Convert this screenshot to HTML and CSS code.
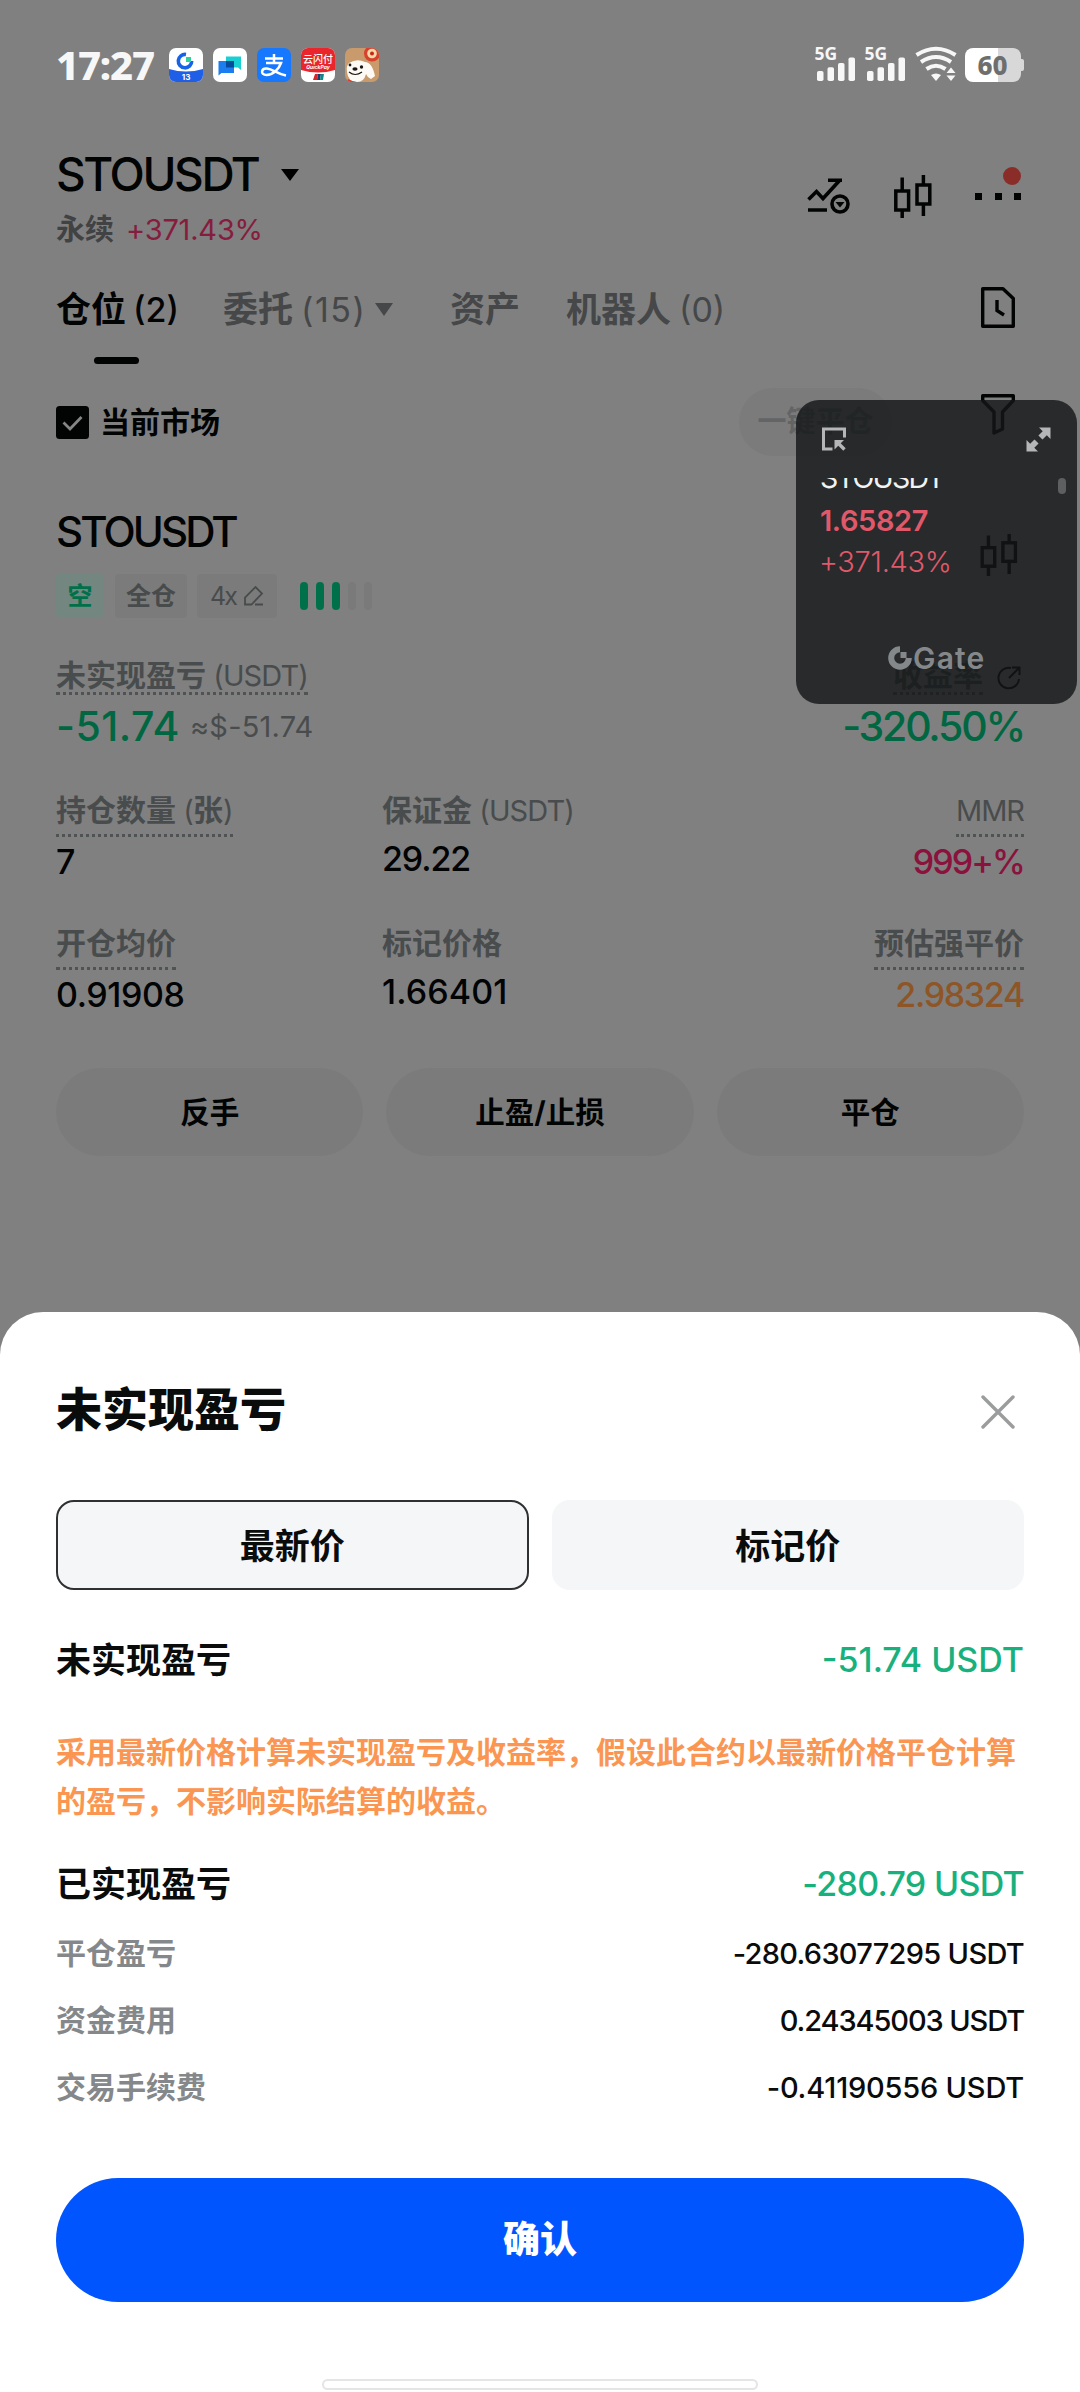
FILE: index.html
```html
<!DOCTYPE html>
<html lang="zh-CN">
<head>
<meta charset="utf-8">
<title>未实现盈亏</title>
<link rel="stylesheet" href="styles.css">
</head>
<body>
<div class="screen">
  <div class="status">
    <span class="clock">17:27</span>
    <div class="apps">
      <svg width="34" height="34" viewBox="0 0 34 34"><defs><clipPath id="r"><rect width="34" height="34" rx="7"/></clipPath></defs><g clip-path="url(#r)"><rect width="34" height="34" fill="#fff"/><path d="M0 21Q17 26 34 21V34H0Z" fill="#1f5fe8"/><path d="M17 6.500A6.700 6.700 0 1 0 22.700 13" fill="none" stroke="#1763e8" stroke-width="3.600"/><rect x="17" y="9" width="5" height="5" fill="#2fd39a"/></g><text x="17" y="32" text-anchor="middle" class="app-13">13</text></svg>
      <svg width="34" height="34" viewBox="0 0 34 34"><rect width="34" height="34" rx="7" fill="#fff"/><path d="M13 8.500H28V22L25 19.500H13Z" fill="#18cfd4"/><path d="M5.500 13H21V25H8.500L5.500 27.500Z" fill="#1c7df0"/><path d="M13 13H21V19.500H13Z" fill="#064a9c"/></svg>
      <svg width="34" height="34" viewBox="0 0 34 34"><rect width="34" height="34" rx="7" fill="#1677ff"/><path d="M8 10.500H26M17 6V15M9 15H24C22 21 16 27 9.500 27C3 27 4 20 10 20.500C16 21 20 26 29 27.500" fill="none" stroke="#fff" stroke-width="2.500"/></svg>
      <svg width="34" height="34" viewBox="0 0 34 34"><g clip-path="url(#r)"><rect width="34" height="34" fill="#fff"/><path d="M0 0H34V22Q17 27 0 22Z" fill="#e8262b"/><path d="M14 26H17L16 32H12Z" fill="#d4262b"/><path d="M17 26H20L19 32H16Z" fill="#14406f"/><path d="M20 26H23L22 32H19Z" fill="#0a8a86"/></g><text x="17" y="15" text-anchor="middle" class="app-pay">云闪付</text><text x="17" y="21" text-anchor="middle" class="app-quick">QuickPay</text></svg>
      <svg width="34" height="34" viewBox="0 0 34 34"><g clip-path="url(#r)"><rect width="34" height="34" fill="#c99a6b"/><path d="M4 15Q12 10 20 14Q27 14 30 28L26 31Q22 29 21 26Q19 34 12 34Q3 34 2 24Q1 18 4 15Z" fill="#fdfaf6"/><circle cx="27" cy="5.500" r="8" fill="#d8402e"/><circle cx="27" cy="5.500" r="4.800" fill="#f4d9a8"/><circle cx="27" cy="5.500" r="2" fill="#c8281c"/><circle cx="5" cy="17" r="1.400" fill="#1d1612"/><circle cx="16.500" cy="19" r="1.700" fill="#1d1612"/><ellipse cx="10" cy="21" rx="2.600" ry="1.800" fill="#1d1612"/><path d="M4 24Q10 29 17 24" fill="none" stroke="#1d1612" stroke-width="1.200"/><path d="M3 31Q8 34 12 34H2Z" fill="#d63a30"/></g></svg>
    </div>
    <div class="sys">
      <svg class="signal" width="42" height="36" viewBox="0 0 42 36"><text x="-0.500" y="13.500" class="net">5G</text><g fill="#f7f7f7"><rect x="2" y="25" width="6.500" height="10" rx="1.800"/><rect x="12.500" y="21.300" width="6.500" height="13.700" rx="1.800"/><rect x="23" y="17" width="6.500" height="18" rx="1.800"/><rect x="33.500" y="11.500" width="6.500" height="23.500" rx="1.800"/></g></svg>
      <svg class="signal" width="42" height="36" viewBox="0 0 42 36"><text x="-0.500" y="13.500" class="net">5G</text><g fill="#f7f7f7"><rect x="2" y="25" width="6.500" height="10" rx="1.800"/><rect x="12.500" y="21.300" width="6.500" height="13.700" rx="1.800"/><rect x="23" y="17" width="6.500" height="18" rx="1.800"/><rect x="33.500" y="11.500" width="6.500" height="23.500" rx="1.800"/></g></svg>
      <svg class="wifi" width="42" height="36" viewBox="0 0 42 36"><g fill="none" stroke="#f7f7f7" stroke-width="4"><path d="M1.500 9Q21 -3.500 40.500 9"/><path d="M6 16Q21 6 36 16"/><path d="M11.500 23Q21 16.500 30.500 23"/></g><path d="M16 29Q21 26 26 29L21 35Z" fill="#f7f7f7"/><path d="M31.500 27L36 21.500L40.500 27ZM31.500 29.500H40.500L36 35Z" fill="#f7f7f7"/></svg>
      <div class="battery"><span class="pct">60</span></div>
    </div>
  </div>

  <header class="pair">
    <div class="pair-info">
      <div class="pair-name"><span>STOUSDT</span><svg width="18" height="12" viewBox="0 0 18 12"><path d="M0 0H18L9 12Z"/></svg></div>
      <div class="pair-sub"><span class="zh">永续</span><span class="chg">+371.43%</span></div>
    </div>
    <div class="pair-tools">
      <svg width="44" height="36" viewBox="0 0 44 36" fill="none" stroke="#020303" stroke-width="3.600"><path d="M1.500 21.500L9.500 13.500L16 20.500L33 2M21 2.300H35M1 32H20"/><circle cx="33" cy="26" r="8"/><path d="M28.500 24H37.500L33 29.500Z" fill="#020303" stroke="none"/></svg>
      <svg class="kline" width="38" height="43" viewBox="0 0 38 43" fill="none" stroke="#020303" stroke-width="3.500"><rect x="1.800" y="16" width="12.800" height="19"/><rect x="23" y="10" width="12.800" height="19"/><path d="M8.200 2.500V16M8.200 35V43M29.400 0V10M29.400 29V41"/></svg>
      <div class="more"><i></i><i></i><i></i><b class="dot"></b></div>
    </div>
  </header>

  <nav class="tabs">
    <div class="tab t1 on"><div class="tab-label"><span class="zh">仓位</span><span>(2)</span></div><div class="bar"></div></div>
    <div class="tab t2"><div class="tab-label"><span class="zh">委托</span><span class="orders">(15)</span><svg width="18" height="13" viewBox="0 0 18 13"><path d="M0 0H18L9 13Z" fill="#454748"/></svg></div></div>
    <div class="tab t3"><div class="tab-label"><span class="zh">资产</span></div></div>
    <div class="tab"><div class="tab-label"><span class="zh">机器人</span><span>(0)</span></div></div>
    <svg class="doc" width="34" height="41" viewBox="0 0 34 41" fill="none" stroke="#020303" stroke-width="3.400"><path d="M1.700 1.700H22L32.300 11.500V39.300H1.700Z" stroke-linejoin="round"/><path d="M16 13V23.500L23 28"/></svg>
  </nav>

  <div class="filters">
    <div class="check"><svg width="33" height="33" viewBox="0 0 33 33"><rect width="33" height="33" rx="3.500" fill="#020303"/><path d="M7.500 16.500L14 23L25.500 11" fill="none" stroke="#858585" stroke-width="2.800"/></svg><span>当前市场</span></div>
    <div class="close-all">一键平仓</div>
    <svg class="funnel" width="34" height="41" viewBox="0 0 34 41" fill="none" stroke="#020303" stroke-width="3.400"><path d="M1.700 1.700H32.300V6.500L21.500 18V35L13 39V18L1.700 6.500Z" stroke-linejoin="round"/></svg>
  </div>

  <section class="position">
    <div class="pos-head">
      <div>
        <div class="pos-name">STOUSDT</div>
        <div class="badges">
          <span class="badge short">空</span>
          <span class="badge cross">全仓</span>
          <span class="badge lever">4x<svg width="20" height="20" viewBox="0 0 20 20" fill="none" stroke="#484b4c" stroke-width="1.800"><path d="M1 18.500V11.500L11.500 1L18 7.500L7.500 18.500ZM11 18.500H19"/></svg></span>
          <span class="adl"><i class="lit"></i><i class="lit"></i><i class="lit"></i><i></i><i></i></span>
        </div>
      </div>
      <svg class="kline-sm" width="38" height="42" viewBox="0 0 38 43" fill="none" stroke="#020303" stroke-width="3.500"><rect x="1.800" y="14" width="12.800" height="19"/><rect x="23" y="9" width="12.800" height="19"/><path d="M8.200 1.500V14M8.200 33V43M29.400 0V9M29.400 28V41"/></svg>
    </div>
    <div class="pnl">
      <div>
        <div class="label dotted"><span class="zh">未实现盈亏</span> (USDT)</div>
        <div class="pnl-value"><span class="big">-51.74</span><span class="approx">≈$-51.74</span></div>
      </div>
      <div class="right">
        <div class="roi"><div class="label dotted"><span class="zh">收益率</span></div><svg width="24" height="24" viewBox="0 0 24 24" fill="none" stroke="#020303" stroke-width="2"><path d="M14 2A10.300 10.300 0 1 0 22 13M12 12L22 2M15 1.500H22.500V9"/></svg></div>
        <div class="big rate">-320.50%</div>
      </div>
    </div>
    <div class="metrics">
      <div><div class="label dotted"><span class="zh">持仓数量</span> (<span class="zh">张</span>)</div><div class="val">7</div></div>
      <div><div class="label"><span class="zh">保证金</span> (USDT)</div><div class="val tight">29.22</div></div>
      <div class="right"><div class="label dotted mmr">MMR</div><div class="val tighter red">999+%</div></div>
      <div><div class="label dotted"><span class="zh">开仓均价</span></div><div class="val">0.91908</div></div>
      <div><div class="label"><span class="zh">标记价格</span></div><div class="val mark">1.66401</div></div>
      <div class="right"><div class="label dotted"><span class="zh">预估强平价</span></div><div class="val liq">2.98324</div></div>
    </div>
    <div class="actions"><div class="action">反手</div><div class="action">止盈/止损</div><div class="action">平仓</div></div>
  </section>

  <aside class="float">
    <div class="float-bar">
      <svg width="24" height="24" viewBox="0 0 24 24" fill="none" stroke="#b4b6b7" stroke-width="3"><path d="M22.500 10.500V2H1.500V22H10.500"/><path d="M22.500 22.500L15.500 15.500" stroke-width="3.400"/><path d="M12.500 13H22L12.500 22.500Z" fill="#b4b6b7" stroke="none"/></svg>
      <svg width="25" height="25" viewBox="0 0 25 25"><path d="M13 0.500H24.500V12L20.800 8.300L16.500 12.600L12.400 8.500L16.700 4.200ZM0.500 13L4.200 16.700L8.500 12.400L12.600 16.500L8.300 20.800L12 24.500H0.500Z" fill="#b4b6b7"/></svg>
    </div>
    <div class="ticker">
      <div class="clip"><span>STOUSDT</span></div>
      <div class="last">1.65827</div>
      <div class="last-chg">+371.43%</div>
    </div>
    <div class="gate"><svg width="24" height="24" viewBox="0 0 24 24"><path d="M12 3.200A8.800 8.800 0 1 0 20.800 12" fill="none" stroke="#85888a" stroke-width="6"/><rect x="12.500" y="6" width="6" height="6" fill="#85888a"/></svg><span>Gate</span></div>
    <div class="thumb"></div>
  </aside>

  <section class="sheet">
    <div class="sheet-head"><h1>未实现盈亏</h1><svg width="34" height="34" viewBox="0 0 34 34" fill="none" stroke="#9b9c9d" stroke-width="3.400" stroke-linecap="round"><path d="M2 2L32 32M32 2L2 32"/></svg></div>
    <div class="segments"><div class="seg active">最新价</div><div class="seg">标记价</div></div>
    <div class="sum first"><span class="name">未实现盈亏</span><span class="amount">-51.74 USDT</span></div>
    <p class="note">采用最新价格计算未实现盈亏及收益率，假设此合约以最新价格平仓计算的盈亏，不影响实际结算的收益。</p>
    <div class="sum"><span class="name">已实现盈亏</span><span class="amount realized">-280.79 USDT</span></div>
    <div class="details">
      <div class="detail"><span class="name">平仓盈亏</span><span class="closing">-280.63077295 USDT</span></div>
      <div class="detail"><span class="name">资金费用</span><span class="funding">0.24345003 USDT</span></div>
      <div class="detail"><span class="name">交易手续费</span><span class="fee">-0.41190556 USDT</span></div>
    </div>
    <div class="confirm">确认</div>
    <div class="home"></div>
  </section>
</div>
</body>
</html>
```
FILE: styles.css
```css
* { box-sizing: border-box; }
body { margin: 0; font-family: Inter, "Noto Sans CJK SC", sans-serif; color: #020303; }
svg { display: block; flex: none; }
.screen { position: relative; width: 1080px; height: 2392px; background: #808080; overflow: hidden; display: flex; flex-direction: column; }
.zh { font-weight: 700; letter-spacing: 0; }

/* status bar */
.status { height: 130px; padding: 0 56px; display: flex; align-items: center; color: #f7f7f7; }
.clock { font: 800 40px/50px "Noto Sans", sans-serif; letter-spacing: -1.2px; width: 113px; white-space: nowrap; }
.apps { display: flex; gap: 10px; }
.app-13 { font: 700 8px Inter, sans-serif; fill: #fff; }
.app-pay { font: 500 10px "Noto Sans CJK SC", sans-serif; fill: #fff; }
.app-quick { font: italic 700 5px Inter, sans-serif; fill: #fff; }
.sys { margin-left: auto; display: flex; align-items: center; }
.signal { margin: -2px 8px 0 0; overflow: visible; }
.net { font: 700 17.5px "Noto Sans", sans-serif; fill: #f7f7f7; }
.wifi { margin: -2px 8px 0 0; }
.battery { position: relative; width: 56px; height: 34px; margin-right: 3px; border-radius: 8px; background: linear-gradient(90deg, #fff 33px, #d8d8d8 33px); display: flex; align-items: center; justify-content: center; }
.battery::after { content: ""; position: absolute; right: -3px; top: 11px; width: 3px; height: 12px; border-radius: 0 2px 2px 0; background: #d8d8d8; }
.pct { font: 800 26px/34px "Noto Sans", sans-serif; color: #6e6e6e; padding-right: 1px; }

/* trading pair header */
.pair { height: 132px; padding: 14px 56px 0; display: flex; justify-content: space-between; }
.pair-name { display: flex; align-items: center; gap: 23px; height: 61px; font-size: 46px; font-weight: 500; line-height: 61px; letter-spacing: -2.4px; }
.pair-sub { display: flex; align-items: center; gap: 12px; height: 50px; font-size: 29px; line-height: 50px; letter-spacing: -0.2px; color: #404243; }
.chg { color: #861c3e; }
.pair-tools { height: 104px; display: flex; align-items: center; padding-right: 3px; }
.kline { margin: 0 43px 0 43px; }
.more { position: relative; width: 46px; display: flex; justify-content: space-between; }
.more i { width: 7px; height: 7px; background: #020303; }
.dot { position: absolute; right: 0; top: -26px; width: 18px; height: 18px; border-radius: 50%; background: #8a2d28; }

/* tabs */
.tabs { height: 112px; padding: 20px 65px 0 56px; display: flex; gap: 46px; }
.tab { color: #454748; }
.tab.on { color: #020303; }
.t1 { width: 121px; }
.t2 { width: 181px; }
.t3 { width: 70px; }
.tab-label { display: flex; align-items: center; gap: 8px; height: 55px; font-size: 34px; line-height: 55px; white-space: nowrap; }
.on .tab-label { font-weight: 500; gap: 7px; }
.tab-label .zh { font-size: 35px; }
.tab-label svg { margin-left: 1px; }
.orders { letter-spacing: 1.5px; }
.bar { width: 45px; height: 7px; margin: 20px auto 0; border-radius: 3.5px; background: #020303; }
.doc { margin: 5px 0 0 auto; }

/* filter row */
.filters { height: 96px; padding: 0 65px 0 56px; display: flex; align-items: center; }
.check { display: flex; align-items: center; gap: 11px; font-size: 30px; font-weight: 700; line-height: 40px; }
.check span { margin-top: -1px; }
.close-all { margin-left: auto; width: 153px; height: 68px; border-radius: 34px; background: #7b7b7b; color: #636465; font-size: 29px; font-weight: 700; line-height: 68px; text-align: center; }
.funnel { margin: 0 0 15px 89px; }

/* position card */
.position { padding: 31px 56px 0; }
.pos-head { display: flex; justify-content: space-between; }
.pos-name { height: 60px; font-size: 42px; font-weight: 500; line-height: 61px; letter-spacing: -2.9px; }
.kline-sm { margin: 33px 6px 0 0; }
.badges { display: flex; align-items: center; margin-top: 13px; height: 44px; }
.badge { height: 44px; border-radius: 4px; background: #7b7b7b; color: #484b4c; font-size: 25px; font-weight: 700; line-height: 44px; text-align: center; }
.short { width: 48px; background: #738680; color: #00704a; }
.cross { width: 72px; margin-left: 11px; }
.lever { width: 80px; margin-left: 10px; display: flex; align-items: center; justify-content: center; gap: 8px; font-weight: 400; letter-spacing: -1.8px; }
.adl { display: flex; gap: 8px; margin-left: 23px; }
.adl i { width: 8px; height: 28px; border-radius: 4px; background: #7a7a7a; }
.adl .lit { background: #00704a; }
.label { width: fit-content; font-size: 29px; line-height: 46px; letter-spacing: -0.9px; color: #494c4d; white-space: nowrap; }
.label .zh { font-size: 30px; line-height: 1; }
.dotted { border-bottom: 3px dotted #505354; }
.mmr { letter-spacing: -1px; }
.right { display: flex; flex-direction: column; align-items: flex-end; }
.pnl { display: flex; justify-content: space-between; margin-top: 42px; }
.pnl .label { line-height: 32px; }
.pnl-value { display: flex; align-items: center; gap: 10px; margin-top: 6px; }
.big { font-size: 41px; font-weight: 500; line-height: 50px; letter-spacing: 0.5px; color: #006742; }
.rate { margin-top: 6px; letter-spacing: -2.2px; }
.approx { font-size: 29px; letter-spacing: 0.2px; color: #494c4d; }
.roi { display: flex; align-items: center; gap: 14px; margin-right: 3px; }
.metrics { display: grid; grid-template-columns: 326px 326px 1fr; row-gap: 39px; margin-top: 37px; }
.val { margin-top: 5px; font-size: 34px; font-weight: 500; line-height: 40px; letter-spacing: -0.4px; }
.tight { letter-spacing: -1.1px; }
.tighter { letter-spacing: -1.9px; }
.mark { letter-spacing: 0.1px; }
.red { color: #8a123c; }
.liq { color: #8e5526; letter-spacing: -1.3px; }
.actions { display: grid; grid-template-columns: repeat(3, 1fr); gap: 23px; margin-top: 53px; }
.action { height: 88px; border-radius: 44px; background: #7b7b7b; font-size: 29.5px; font-weight: 700; line-height: 88px; text-align: center; }

/* floating ticker window over the page */
.float { position: absolute; left: 796px; top: 400px; width: 281px; height: 304px; padding: 27px 26px 0 24px; border-radius: 23px; background: rgba(20, 22, 23, 0.81); }
.float-bar { display: flex; justify-content: space-between; padding-left: 2px; }
.ticker { margin-top: 26px; }
.clip { height: 14px; overflow: hidden; display: flex; align-items: flex-end; font-size: 28.5px; line-height: 29px; letter-spacing: -1.7px; color: #f2f2f2; }
.last { margin-top: 9px; font-size: 29px; font-weight: 600; line-height: 40px; letter-spacing: -0.4px; color: #e0596b; }
.last-chg { font-size: 29px; font-weight: 300; line-height: 40px; letter-spacing: -0.3px; color: #e0596b; margin-top: 1px; margin-left: -1px; }
.gate { display: flex; align-items: center; gap: 1px; height: 34px; margin: 59px 0 0 68px; color: #85888a; font-size: 30px; font-weight: 600; letter-spacing: 1.2px; }
.thumb { position: absolute; right: 11px; top: 78px; width: 8px; height: 16px; border-radius: 4px; background: #5d5f60; }

/* bottom sheet */
.sheet { position: absolute; left: 0; right: 0; top: 1312px; height: 1080px; padding: 62px 56px 0; border-radius: 43px 43px 0 0; background: #fff; color: #0a0b0b; }
.sheet-head { display: flex; justify-content: space-between; align-items: center; height: 70px; }
.sheet-head svg { margin: 6px 9px 0 0; }
h1 { margin: 0; font-size: 46px; font-weight: 900; line-height: 70px; }
.segments { display: grid; grid-template-columns: 1fr 1fr; gap: 23px; margin-top: 56px; }
.seg { height: 90px; border-radius: 18px; background: #f4f6f7; font-size: 35px; font-weight: 700; line-height: 92px; text-align: center; }
.active { border: 2px solid #2f3032; line-height: 88px; }
.sum { display: flex; justify-content: space-between; height: 50px; margin-top: 33px; font-size: 34px; line-height: 50px; }
.sum.first { margin-top: 45px; }
.sum .name { font-size: 35px; font-weight: 700; }
.amount { font-weight: 500; color: #18b17d; }
.realized { letter-spacing: -0.7px; }
.note { margin: 43px 0 0; font-size: 30px; font-weight: 700; line-height: 49px; color: #fa9652; }
.details { margin-top: 11px; }
.detail { display: flex; justify-content: space-between; height: 67px; font-size: 29px; font-weight: 500; line-height: 67px; }
.detail .name { font-size: 30px; font-weight: 700; color: #85888a; }
.closing { letter-spacing: -0.7px; }
.funding { letter-spacing: -1.1px; }
.fee { letter-spacing: -0.2px; }
.confirm { height: 124px; margin-top: 57px; border-radius: 62px; background: #0055ff; color: #fff; font-size: 37px; font-weight: 900; line-height: 124px; text-align: center; }
.home { width: 436px; height: 11px; margin: 77px auto 0; border: 2px solid #e5e5e5; border-radius: 6px; background: #fff; }
```
